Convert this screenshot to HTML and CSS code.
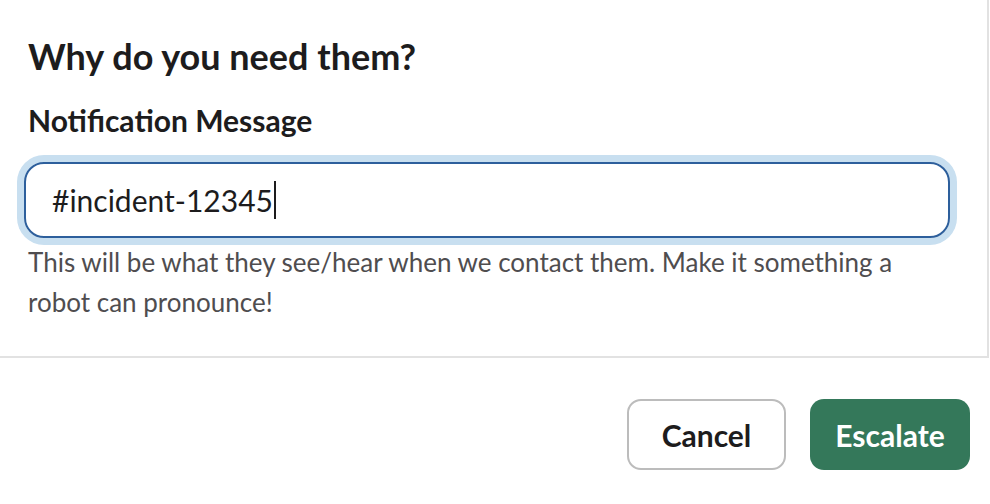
FILE: index.html
```html
<!DOCTYPE html>
<html>
<head>
<meta charset="utf-8">
<link rel="stylesheet" href="styles.css">
</head>
<body>
<div class="modal">
  <div class="modal-body">
    <h2 class="heading">Why do you need them?</h2>
    <label class="label">Notification Message</label>
    <div class="input"><span class="value">#incident-12345</span><span class="caret"></span></div>
    <p class="hint">This will be what they see/hear when we contact them. Make it something a robot can pronounce!</p>
  </div>
  <div class="modal-footer">
    <button class="btn btn-secondary">Cancel</button>
    <button class="btn btn-primary">Escalate</button>
  </div>
</div>
</body>
</html>
```
FILE: styles.css
```css
html, body {
  margin: 0;
  padding: 0;
  background: #ffffff;
}
body {
  font-family: Lato, "Noto Sans", sans-serif;
  color: #1d1c1d;
  width: 990px;
  height: 504px;
  overflow: hidden;
}
.modal {
  display: flex;
  flex-direction: column;
}
.modal-body {
  width: 959px;
  padding: 36px 0 34px 28px;
  border-right: 2px solid #e2e2e2;
  border-bottom: 2px solid #e2e2e2;
  display: flex;
  flex-direction: column;
}
.heading {
  margin: 0;
  font-size: 36px;
  line-height: 40px;
  font-weight: 700;
  color: #1d1c1d;
}
.label {
  margin-top: 26px;
  font-size: 30px;
  line-height: 36px;
  font-weight: 700;
  color: #1d1c1d;
}
.input {
  margin: 24px 0 0 -4px;
  width: 926px;
  height: 76px;
  box-sizing: border-box;
  border: 2px solid #2d5f9c;
  border-radius: 20px;
  box-shadow: 0 0 0 7px #c8dff0;
  padding: 0 26px;
  display: flex;
  align-items: center;
  font-size: 30px;
  color: #1d1c1d;
}
.caret {
  display: inline-block;
  width: 2px;
  height: 38px;
  background: #1d1c1d;
  margin-left: 1px;
}
.hint {
  margin: 4px 0 0 0;
  width: 918px;
  font-size: 26px;
  line-height: 40px;
  color: #4f4d4f;
}
.modal-footer {
  display: flex;
  justify-content: flex-end;
  gap: 24px;
  padding: 41px 20px 0 0;
}
.btn {
  font-family: Lato, "Noto Sans", sans-serif;
  font-size: 30px;
  font-weight: 700;
  height: 71px;
  border-radius: 14px;
  padding: 0;
  box-sizing: border-box;
  cursor: pointer;
}
.btn-secondary {
  width: 159px;
  background: #ffffff;
  color: #1d1c1d;
  border: 2px solid #bcbcbc;
}
.btn-primary {
  width: 160px;
  background: #34785a;
  color: #ffffff;
  border: none;
}
```
